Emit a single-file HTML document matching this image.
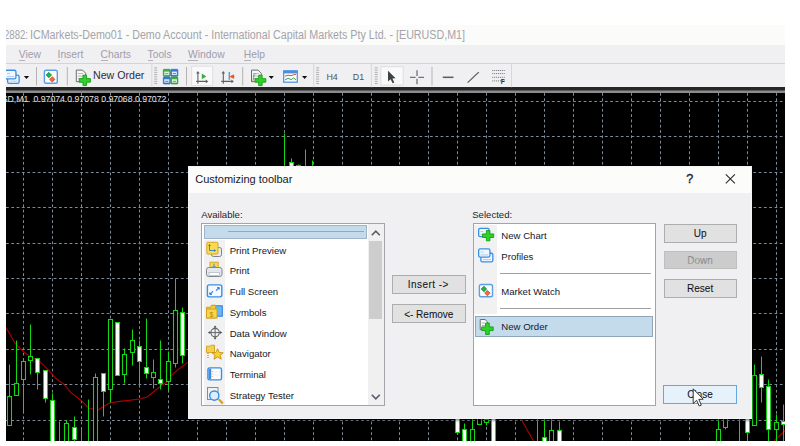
<!DOCTYPE html>
<html><head><meta charset="utf-8">
<style>
html,body{margin:0;padding:0;width:800px;height:446px;overflow:hidden;background:#fff;position:relative;font-family:"Liberation Sans",sans-serif;}
.a{position:absolute;}
.t{position:absolute;white-space:pre;line-height:1;}
.mi{position:absolute;top:45.8px;height:18px;line-height:18px;font-size:10.3px;color:#a09cab;white-space:pre;}
.mi u{text-decoration:none;border-bottom:1px solid #b4b0bc;}
.sep{position:absolute;width:1px;top:67px;height:18px;background:#b8b8b8;}
.gend{position:absolute;width:1px;top:64px;height:24px;background:#d6d6d6;}
.grip{position:absolute;width:3px;top:67px;height:18px;background:repeating-linear-gradient(to bottom,#a8a8a8 0 1px,transparent 1px 2.2px);}
.btn{position:absolute;box-sizing:border-box;border:1px solid #adadad;background:#e1e1e1;font-size:10px;color:#141424;text-align:center;-webkit-text-stroke:0.08px #141424;}
.row{position:absolute;height:20.75px;line-height:22.2px;font-size:9.6px;color:#161628;white-space:pre;}
.hsep{position:absolute;height:1px;background:#a0a0a0;}
</style></head><body>

<!-- main window title bar -->
<div class="a" style="left:6px;top:25px;width:779px;height:20px;background:#fbfbf9;overflow:hidden;">
  <div class="t" style="left:-2.1px;top:-0.2px;line-height:20px;font-size:12px;color:#a4a4ac;transform:scaleX(0.8);transform-origin:0 0;">2882:</div>
  <div class="t" style="left:23.7px;top:-0.2px;line-height:20px;font-size:12px;color:#a4a4ac;transform:scaleX(0.891);transform-origin:0 0;">ICMarkets-Demo01 - Demo Account - International Capital Markets Pty Ltd. - [EURUSD,M1]</div>
</div>

<!-- menu bar -->
<div class="a" style="left:6px;top:45px;width:779px;height:18px;background:#f0f0f2;"></div>
<div class="mi" style="left:18.8px;"><u>V</u>iew</div>
<div class="mi" style="left:57.5px;"><u>I</u>nsert</div>
<div class="mi" style="left:100.6px;"><u>C</u>harts</div>
<div class="mi" style="left:147.5px;"><u>T</u>ools</div>
<div class="mi" style="left:188.1px;"><u>W</u>indow</div>
<div class="mi" style="left:243.8px;"><u>H</u>elp</div>
<div class="a" style="left:6px;top:63px;width:779px;height:1px;background:#d4d4d0;"></div>

<!-- toolbar -->
<div class="a" style="left:6px;top:64px;width:779px;height:23.2px;background:#f0f0f2;"></div>
<div class="a" style="left:6px;top:87px;width:779px;height:3px;background:#262626;"></div>
<div class="a" style="left:6px;top:90px;width:779px;height:1px;background:#5a5a5a;"></div>
<div class="a" style="left:6px;top:91px;width:779px;height:2px;background:#8c8c8c;"></div>
<!--TOOLBAR-->

<svg width="800" height="446" style="position:absolute;left:0;top:0">
<defs><clipPath id="cc"><rect x="6" y="93" width="779" height="348"/></clipPath></defs>
<g clip-path="url(#cc)">
<rect x="0" y="0" width="800" height="446" fill="#000"/>
<g stroke="#7c8a98" stroke-width="1" stroke-dasharray="2.8,2.5"><line x1="23.50" y1="93" x2="23.50" y2="441"/><line x1="52.50" y1="93" x2="52.50" y2="441"/><line x1="81.50" y1="93" x2="81.50" y2="441"/><line x1="110.50" y1="93" x2="110.50" y2="441"/><line x1="139.50" y1="93" x2="139.50" y2="441"/><line x1="168.50" y1="93" x2="168.50" y2="441"/><line x1="197.50" y1="93" x2="197.50" y2="441"/><line x1="226.50" y1="93" x2="226.50" y2="441"/><line x1="255.50" y1="93" x2="255.50" y2="441"/><line x1="284.50" y1="93" x2="284.50" y2="441"/><line x1="313.50" y1="93" x2="313.50" y2="441"/><line x1="342.50" y1="93" x2="342.50" y2="441"/><line x1="371.50" y1="93" x2="371.50" y2="441"/><line x1="399.50" y1="93" x2="399.50" y2="441"/><line x1="428.50" y1="93" x2="428.50" y2="441"/><line x1="457.50" y1="93" x2="457.50" y2="441"/><line x1="486.50" y1="93" x2="486.50" y2="441"/><line x1="515.50" y1="93" x2="515.50" y2="441"/><line x1="544.50" y1="93" x2="544.50" y2="441"/><line x1="573.50" y1="93" x2="573.50" y2="441"/><line x1="602.50" y1="93" x2="602.50" y2="441"/><line x1="631.50" y1="93" x2="631.50" y2="441"/><line x1="660.50" y1="93" x2="660.50" y2="441"/><line x1="689.50" y1="93" x2="689.50" y2="441"/><line x1="718.50" y1="93" x2="718.50" y2="441"/><line x1="747.50" y1="93" x2="747.50" y2="441"/><line x1="776.50" y1="93" x2="776.50" y2="441"/><line x1="6" y1="101.50" x2="785" y2="101.50"/><line x1="6" y1="136.50" x2="785" y2="136.50"/><line x1="6" y1="172.50" x2="785" y2="172.50"/><line x1="6" y1="207.50" x2="785" y2="207.50"/><line x1="6" y1="243.50" x2="785" y2="243.50"/><line x1="6" y1="278.50" x2="785" y2="278.50"/><line x1="6" y1="313.50" x2="785" y2="313.50"/><line x1="6" y1="349.50" x2="785" y2="349.50"/><line x1="6" y1="384.50" x2="785" y2="384.50"/><line x1="6" y1="420.50" x2="785" y2="420.50"/></g>
<g stroke="#b00000" stroke-width="1.1" fill="none">
<polyline points="6.2,327.8 15.2,343.5 23.0,351.4 30.9,357.0 41.0,362.6 48.8,370.4 55.6,378.3 63.4,383.9 71.3,392.9 81.4,400.7 89.2,408.6 98.2,409.7 110.0,402.8 120.2,401.4 140.3,399.0 147.4,396.8 154.4,391.3 160.5,386.3 166.5,382.3 171.6,375.2 178.6,369.2 186.7,363.1 195.0,358.0"/>
<polyline points="519.0,416.0 521.0,419.0 533.0,440.0 535.0,443.0"/>
<polyline points="773.0,443.0 775.7,439.3 784.8,430.9 788.0,428.0"/>
</g>
<g stroke="#12d812" stroke-width="1.05">
<line x1="9.50" y1="364.50" x2="9.50" y2="396.50"/><rect x="7.50" y="396.50" width="4.00" height="29.00" fill="#000"/>
<line x1="16.50" y1="340.50" x2="16.50" y2="383.50"/><rect x="14.50" y="383.50" width="4.00" height="12.00" fill="#000"/>
<line x1="23.50" y1="359.50" x2="23.50" y2="361.50"/><line x1="23.50" y1="379.50" x2="23.50" y2="412.50"/><rect x="21.50" y="361.50" width="4.00" height="18.00" fill="#000"/>
<line x1="30.50" y1="324.50" x2="30.50" y2="356.50"/><line x1="30.50" y1="360.50" x2="30.50" y2="374.50"/><rect x="28.50" y="356.50" width="4.00" height="4.00" fill="#000"/>
<line x1="37.50" y1="372.50" x2="37.50" y2="389.50"/><rect x="35.50" y="358.50" width="4.00" height="14.00" fill="#fff"/>
<line x1="45.50" y1="398.50" x2="45.50" y2="402.50"/><rect x="43.50" y="370.50" width="4.00" height="28.00" fill="#fff"/>
<line x1="52.50" y1="393.50" x2="52.50" y2="400.50"/><rect x="50.50" y="400.50" width="4.00" height="45.00" fill="#fff"/>
<line x1="59.50" y1="421.50" x2="59.50" y2="445.50"/><rect x="57.50" y="445.50" width="4.00" height="1.00" fill="#fff"/>
<line x1="66.50" y1="420.50" x2="66.50" y2="423.50"/><rect x="64.50" y="423.50" width="4.00" height="22.00" fill="#000"/>
<line x1="74.50" y1="416.50" x2="74.50" y2="427.50"/><line x1="74.50" y1="439.50" x2="74.50" y2="445.50"/><rect x="72.50" y="427.50" width="4.00" height="12.00" fill="#fff"/>
<line x1="81.50" y1="427.50" x2="81.50" y2="445.50"/><rect x="79.50" y="445.50" width="4.00" height="1.00" fill="#fff"/>
<line x1="88.50" y1="399.50" x2="88.50" y2="445.50"/><rect x="86.50" y="445.50" width="4.00" height="1.00" fill="#fff"/>
<line x1="95.50" y1="373.50" x2="95.50" y2="377.50"/><rect x="93.50" y="377.50" width="4.00" height="68.00" fill="#000"/>
<line x1="103.50" y1="391.50" x2="103.50" y2="416.50"/><rect x="101.50" y="373.50" width="4.00" height="18.00" fill="#fff"/>
<line x1="110.50" y1="389.50" x2="110.50" y2="402.50"/><rect x="108.50" y="319.50" width="4.00" height="70.00" fill="#000"/>
<rect x="115.50" y="322.50" width="4.00" height="53.00" fill="#fff"/>
<line x1="124.50" y1="348.50" x2="124.50" y2="354.50"/><line x1="124.50" y1="374.50" x2="124.50" y2="383.50"/><rect x="122.50" y="354.50" width="4.00" height="20.00" fill="#000"/>
<line x1="132.50" y1="329.50" x2="132.50" y2="340.50"/><line x1="132.50" y1="352.50" x2="132.50" y2="365.50"/><rect x="130.50" y="340.50" width="4.00" height="12.00" fill="#000"/>
<line x1="139.50" y1="340.50" x2="139.50" y2="346.50"/><line x1="139.50" y1="361.50" x2="139.50" y2="387.50"/><rect x="137.50" y="346.50" width="4.00" height="15.00" fill="#fff"/>
<line x1="146.50" y1="318.50" x2="146.50" y2="367.50"/><line x1="146.50" y1="373.50" x2="146.50" y2="378.50"/><rect x="144.50" y="367.50" width="4.00" height="6.00" fill="#fff"/>
<line x1="153.50" y1="359.50" x2="153.50" y2="372.50"/><line x1="153.50" y1="377.50" x2="153.50" y2="388.50"/><rect x="151.50" y="372.50" width="4.00" height="5.00" fill="#000"/>
<line x1="160.50" y1="340.50" x2="160.50" y2="379.50"/><line x1="160.50" y1="383.50" x2="160.50" y2="389.50"/><rect x="158.50" y="379.50" width="4.00" height="4.00" fill="#fff"/>
<line x1="168.50" y1="351.50" x2="168.50" y2="361.50"/><line x1="168.50" y1="381.50" x2="168.50" y2="390.50"/><rect x="166.50" y="361.50" width="4.00" height="20.00" fill="#000"/>
<line x1="175.50" y1="278.50" x2="175.50" y2="310.50"/><line x1="175.50" y1="363.50" x2="175.50" y2="367.50"/><rect x="173.50" y="310.50" width="4.00" height="53.00" fill="#000"/>
<line x1="182.50" y1="307.50" x2="182.50" y2="312.50"/><line x1="182.50" y1="355.50" x2="182.50" y2="363.50"/><rect x="180.50" y="312.50" width="4.00" height="43.00" fill="#fff"/>
<line x1="284.50" y1="133.50" x2="284.50" y2="200.50"/><line x1="284.50" y1="240.50" x2="284.50" y2="260.50"/><rect x="282.50" y="200.50" width="4.00" height="40.00" fill="#000"/>
<line x1="291.50" y1="158.50" x2="291.50" y2="162.50"/><line x1="291.50" y1="168.50" x2="291.50" y2="180.50"/><rect x="289.50" y="162.50" width="4.00" height="6.00" fill="#fff"/>
<line x1="298.50" y1="164.50" x2="298.50" y2="165.50"/><line x1="298.50" y1="168.50" x2="298.50" y2="180.50"/><rect x="296.50" y="165.50" width="4.00" height="3.00" fill="#000"/>
<line x1="305.50" y1="149.50" x2="305.50" y2="200.50"/><line x1="305.50" y1="240.50" x2="305.50" y2="260.50"/><rect x="303.50" y="200.50" width="4.00" height="40.00" fill="#000"/>
<line x1="312.50" y1="160.50" x2="312.50" y2="200.50"/><line x1="312.50" y1="240.50" x2="312.50" y2="260.50"/><rect x="310.50" y="200.50" width="4.00" height="40.00" fill="#000"/>
<line x1="457.50" y1="400.50" x2="457.50" y2="405.50"/><rect x="455.50" y="405.50" width="4.00" height="27.00" fill="#fff"/>
<line x1="464.50" y1="423.50" x2="464.50" y2="429.50"/><rect x="462.50" y="429.50" width="4.00" height="16.00" fill="#fff"/>
<line x1="472.50" y1="400.50" x2="472.50" y2="429.50"/><rect x="470.50" y="429.50" width="4.00" height="16.00" fill="#000"/>
<line x1="479.50" y1="400.50" x2="479.50" y2="405.50"/><rect x="477.50" y="405.50" width="4.00" height="19.00" fill="#000"/>
<line x1="486.50" y1="400.50" x2="486.50" y2="419.50"/><line x1="486.50" y1="422.50" x2="486.50" y2="425.50"/><rect x="484.50" y="419.50" width="4.00" height="3.00" fill="#000"/>
<line x1="493.50" y1="400.50" x2="493.50" y2="405.50"/><rect x="491.50" y="405.50" width="4.00" height="40.00" fill="#fff"/>
<line x1="537.50" y1="400.50" x2="537.50" y2="445.50"/><rect x="535.50" y="445.50" width="4.00" height="1.00" fill="#000"/>
<line x1="544.50" y1="400.50" x2="544.50" y2="437.50"/><rect x="542.50" y="437.50" width="4.00" height="8.00" fill="#fff"/>
<line x1="551.50" y1="400.50" x2="551.50" y2="430.50"/><rect x="549.50" y="430.50" width="4.00" height="15.00" fill="#000"/>
<line x1="559.50" y1="421.50" x2="559.50" y2="430.50"/><rect x="557.50" y="430.50" width="4.00" height="15.00" fill="#fff"/>
<line x1="718.50" y1="400.50" x2="718.50" y2="429.50"/><rect x="716.50" y="429.50" width="4.00" height="16.00" fill="#000"/>
<line x1="725.50" y1="400.50" x2="725.50" y2="405.50"/><line x1="725.50" y1="427.50" x2="725.50" y2="429.50"/><rect x="723.50" y="405.50" width="4.00" height="22.00" fill="#000"/>
<line x1="739.50" y1="400.50" x2="739.50" y2="445.50"/><rect x="737.50" y="445.50" width="4.00" height="1.00" fill="#000"/>
<line x1="747.50" y1="400.50" x2="747.50" y2="405.50"/><line x1="747.50" y1="432.50" x2="747.50" y2="445.50"/><rect x="745.50" y="405.50" width="4.00" height="27.00" fill="#fff"/>
<line x1="754.50" y1="364.50" x2="754.50" y2="375.50"/><rect x="752.50" y="375.50" width="4.00" height="50.00" fill="#000"/>
<line x1="761.50" y1="356.50" x2="761.50" y2="374.50"/><line x1="761.50" y1="387.50" x2="761.50" y2="402.50"/><rect x="759.50" y="374.50" width="4.00" height="13.00" fill="#fff"/>
<line x1="768.50" y1="379.50" x2="768.50" y2="386.50"/><line x1="768.50" y1="429.50" x2="768.50" y2="445.50"/><rect x="766.50" y="386.50" width="4.00" height="43.00" fill="#fff"/>
<line x1="776.50" y1="414.50" x2="776.50" y2="422.50"/><line x1="776.50" y1="429.50" x2="776.50" y2="445.50"/><rect x="774.50" y="422.50" width="4.00" height="7.00" fill="#000"/>
<line x1="783.50" y1="404.50" x2="783.50" y2="421.50"/><line x1="783.50" y1="424.50" x2="783.50" y2="445.50"/><rect x="781.50" y="421.50" width="4.00" height="3.00" fill="#fff"/>
</g>
</g></svg>

<!-- chart header text -->
<div class="a" style="left:6px;top:93px;width:200px;height:14px;overflow:hidden;">
<div class="t" style="left:-10.5px;top:2.1px;font-size:8.7px;color:#e4e4e4;transform:scaleY(1.1);transform-origin:0 100%;">USD,M1</div>
<div class="t" style="left:27.5px;top:2.1px;font-size:8.7px;color:#e4e4e4;transform:scaleY(1.1);transform-origin:0 100%;">0.97074 0.97078 0.97068 0.97072</div>
</div>

<!-- dialog -->
<div class="a" style="left:188px;top:166px;width:563.6px;height:253px;box-sizing:border-box;border:1px solid #f4f4f4;background:#f0f0f2;box-shadow:0 1px 3px rgba(0,0,0,0.6);"></div>
<div class="a" style="left:189px;top:166.5px;width:561.6px;height:26.1px;background:#fcfcfa;"></div>
<div class="t" style="left:195.2px;top:174.4px;font-size:11px;color:#16162a;">Customizing toolbar</div>
<div class="t" style="left:686.2px;top:173.2px;font-size:12.6px;color:#22222e;-webkit-text-stroke:0.35px #22222e;">?</div>
<svg class="a" style="left:724px;top:173px" width="13" height="12"><path d="M1.8 1.3 L10.9 10.4 M10.9 1.3 L1.8 10.4" stroke="#2a2a30" stroke-width="1.1"/></svg>

<div class="t" style="left:201.2px;top:209.5px;font-size:9.6px;color:#1c1c2c;">Available:</div>
<div class="t" style="left:472.2px;top:209.5px;font-size:9.6px;color:#1c1c2c;">Selected:</div>

<!-- left listbox -->
<div class="a" style="left:201.2px;top:223.3px;width:183.4px;height:183px;box-sizing:border-box;border:1px solid #a4a4a8;background:#fff;"></div>
<div class="a" style="left:204px;top:239.5px;width:21.3px;height:165.5px;background:#f1f1f1;"></div>
<div class="a" style="left:204.2px;top:225px;width:162.4px;height:14.3px;box-sizing:border-box;border:1px solid #9fb4c6;background:#c4dbec;"></div>
<div class="hsep" style="left:228.4px;top:231.3px;width:136px;background:#9aa6b0;"></div>
<!-- scrollbar -->
<div class="a" style="left:367.6px;top:224.3px;width:16px;height:181px;background:#f0f0f0;"></div>
<div class="a" style="left:369px;top:240.6px;width:13px;height:78.8px;background:#cdcdcd;"></div>
<svg class="a" style="left:370px;top:229px" width="12" height="8"><path d="M1.8 6.2 L5.8 2.2 L9.8 6.2" stroke="#5a5a6a" stroke-width="1.6" fill="none"/></svg>
<svg class="a" style="left:369.5px;top:393px" width="12" height="8"><path d="M1.8 1.8 L5.8 5.8 L9.8 1.8" stroke="#5a5a6a" stroke-width="1.6" fill="none"/></svg>

<div class="row" style="left:229.7px;top:239.5px;">Print Preview</div>
<div class="row" style="left:229.7px;top:260.25px;">Print</div>
<div class="row" style="left:229.7px;top:281px;">Full Screen</div>
<div class="row" style="left:229.7px;top:301.75px;">Symbols</div>
<div class="row" style="left:229.7px;top:322.5px;">Data Window</div>
<div class="row" style="left:229.7px;top:343.25px;">Navigator</div>
<div class="row" style="left:229.7px;top:364px;">Terminal</div>
<div class="row" style="left:229.7px;top:384.75px;">Strategy Tester</div>
<!--LICONS-->

<!-- middle buttons -->
<div class="btn" style="left:392px;top:274.5px;width:73.5px;height:19px;line-height:18.6px;letter-spacing:0.45px;text-indent:-1px;">Insert -&gt;</div>
<div class="btn" style="left:392px;top:304px;width:73.5px;height:19.2px;line-height:19px;">&lt;- Remove</div>

<!-- right listbox -->
<div class="a" style="left:472.6px;top:223.3px;width:183px;height:183px;box-sizing:border-box;border:1px solid #a4a4a8;background:#fff;"></div>
<div class="a" style="left:474px;top:225px;width:22.8px;height:89px;background:#f1f1f1;"></div>
<div class="hsep" style="left:500px;top:273px;width:150.5px;background:#a0a0a0;"></div>
<div class="hsep" style="left:500px;top:308.3px;width:150.5px;background:#a0a0a0;"></div>
<div class="a" style="left:475px;top:316.25px;width:178px;height:20.5px;box-sizing:border-box;border:1px solid #8fa6ba;background:#c4dbec;"></div>
<div class="row" style="left:501.3px;top:225px;">New Chart</div>
<div class="row" style="left:501.3px;top:245.75px;">Profiles</div>
<div class="row" style="left:501.3px;top:281px;">Market Watch</div>
<div class="row" style="left:501.3px;top:316.25px;">New Order</div>
<!--RICONS-->

<!-- right buttons -->
<div class="btn" style="left:663.5px;top:224px;width:73.2px;height:18.6px;line-height:17.6px;">Up</div>
<div class="btn" style="left:663.5px;top:250.9px;width:73.2px;height:18.5px;line-height:18px;background:#cccccc;border-color:#bfbfbf;color:#a2a2a2;">Down</div>
<div class="btn" style="left:663.5px;top:279.1px;width:73.2px;height:18.6px;line-height:18.6px;">Reset</div>
<div class="btn" style="left:663.1px;top:384.6px;width:73.7px;height:19.1px;line-height:18.2px;border:1.6px solid #62a8e6;background:#e5f1fb;">Close</div>
<!-- mouse cursor -->
<svg class="a" style="left:690px;top:386px" width="16" height="22"><path d="M3.2 2.8 L3.2 17.5 L6.6 14.3 L9.2 20 L11.3 19.1 L8.8 13.4 L13.2 13.2 Z" fill="#fff" stroke="#202020" stroke-width="0.9"/></svg>


<svg class="a" style="left:0;top:0;pointer-events:none" width="800" height="446"><defs><clipPath id="ov"><rect x="6" y="0" width="779" height="446"/></clipPath></defs><g clip-path="url(#ov)"><rect x="7.65" y="75.15" width="11.45" height="8.20" rx="1.6" fill="#f2f8fe" stroke="#3a8ee6" stroke-width="1.3"/><path d="M9.50 78.30 H12.74 M9.50 81.15 H17.25" stroke="#9cc0e6" stroke-width="0.8"/><rect x="5.25" y="70.25" width="10.70" height="8.70" rx="1.6" fill="#f2f8fe" stroke="#3a8ee6" stroke-width="1.3"/><path d="M7.10 73.60 H10.00 M7.10 76.60 H14.10" stroke="#9cc0e6" stroke-width="0.8"/><path d="M23.90 76.10 H29.10 L26.50 79.10 Z" fill="#101010"/><rect x="36" y="67" width="1" height="18.4" fill="#b4b4b4"/><rect x="44.40" y="70.30" width="12.90" height="13.00" rx="1.8" fill="#fcfeff" stroke="#5aa0e8" stroke-width="1.4"/><path d="M48.85 72.36 L51.56 75.07 L48.85 77.79 L46.13 75.07 Z" fill="#24b04a" stroke="#108030" stroke-width="0.7"/><path d="M52.28 76.67 L55.00 79.39 L52.28 82.11 L49.56 79.39 Z" fill="#f46a3a" stroke="#d04010" stroke-width="0.7"/><rect x="66.8" y="67" width="1" height="18.4" fill="#b4b4b4"/><path d="M76.30 70.10 H82.56 L85.70 73.24 V81.70 H76.30 Z" fill="#f6f6f6" stroke="#6c6c6c" stroke-width="1"/><path d="M77.80 73.60 H83.20 M77.80 76.10 H84.20 M77.80 78.60 H84.20" stroke="#a8a8a8" stroke-width="0.8"/><path d="M83.01 75.20 H86.59 V78.61 H90.40 V82.19 H86.59 V85.60 H83.01 V82.19 H79.20 V78.61 H83.01 Z" fill="#30d030" stroke="#10a010" stroke-width="0.9" stroke-linejoin="round"/><text x="93" y="79.3" font-family="Liberation Sans" font-size="10.63" fill="#2c2c44">New Order</text><rect x="151.3" y="64" width="1" height="23.2" fill="#d8d8d8"/><rect x="154.20" y="67.40" width="3" height="0.9" fill="#a8a8a8"/><rect x="154.20" y="69.65" width="3" height="0.9" fill="#a8a8a8"/><rect x="154.20" y="71.90" width="3" height="0.9" fill="#a8a8a8"/><rect x="154.20" y="74.15" width="3" height="0.9" fill="#a8a8a8"/><rect x="154.20" y="76.40" width="3" height="0.9" fill="#a8a8a8"/><rect x="154.20" y="78.65" width="3" height="0.9" fill="#a8a8a8"/><rect x="154.20" y="80.90" width="3" height="0.9" fill="#a8a8a8"/><rect x="154.20" y="83.15" width="3" height="0.9" fill="#a8a8a8"/><rect x="163.30" y="69.30" width="7.00" height="7.05" rx="0.8" fill="#3cb043" stroke="#2a8a30" stroke-width="0.6"/><rect x="164.30" y="71.60" width="5.00" height="3.45" fill="#ffffff" opacity="0.85"/><rect x="165.20" y="73.20" width="3.20" height="0.9" fill="#3cb043"/><rect x="170.90" y="69.30" width="7.00" height="7.05" rx="0.8" fill="#2f7fe0" stroke="#1e60b8" stroke-width="0.6"/><rect x="171.90" y="71.60" width="5.00" height="3.45" fill="#ffffff" opacity="0.85"/><rect x="172.80" y="73.20" width="3.20" height="0.9" fill="#2f7fe0"/><rect x="163.30" y="76.95" width="7.00" height="7.05" rx="0.8" fill="#2f7fe0" stroke="#1e60b8" stroke-width="0.6"/><rect x="164.30" y="79.25" width="5.00" height="3.45" fill="#ffffff" opacity="0.85"/><rect x="165.20" y="80.85" width="3.20" height="0.9" fill="#2f7fe0"/><rect x="170.90" y="76.95" width="7.00" height="7.05" rx="0.8" fill="#3cb043" stroke="#2a8a30" stroke-width="0.6"/><rect x="171.90" y="79.25" width="5.00" height="3.45" fill="#ffffff" opacity="0.85"/><rect x="172.80" y="80.85" width="3.20" height="0.9" fill="#3cb043"/><rect x="186" y="67" width="1" height="18.4" fill="#b4b4b4"/><rect x="191.6" y="66.2" width="21" height="19.4" fill="#f9f9f9" stroke="#e0e0e0" stroke-width="1"/><path d="M197.90 72.30 V83.70 M196.20 81.40 H207.00" stroke="#5c6064" stroke-width="1.1"/><path d="M196.10 73.50 L197.90 71.10 L199.70 73.50 Z M205.80 79.60 L208.20 81.40 L205.80 83.20 Z" fill="#5c6064"/><path d="M201.8 73.6 L206.3 76.4 L201.8 79.2 Z" fill="#30b040"/><path d="M223.30 72.30 V83.70 M221.20 81.40 H232.60" stroke="#5c6064" stroke-width="1.1"/><path d="M221.50 73.50 L223.30 71.10 L225.10 73.50 Z M231.40 79.60 L233.80 81.40 L231.40 83.20 Z" fill="#5c6064"/><rect x="228.6" y="71.9" width="1.5" height="7.9" fill="#5c9ad8"/><path d="M230.2 76.6 L233.6 74.8 L233.6 78.4 Z M233 76.6 H234.5" fill="#e05a20" stroke="#e05a20" stroke-width="0.8"/><rect x="242.2" y="67" width="1" height="18.4" fill="#b4b4b4"/><path d="M251.50 70.10 H258.02 L261.30 73.38 V81.70 H251.50 Z" fill="#f6f6f6" stroke="#6c6c6c" stroke-width="1"/><path d="M253.00 73.60 H258.80 M253.00 76.10 H259.80 M253.00 78.60 H259.80" stroke="#a8a8a8" stroke-width="0.8"/><text x="252.5" y="79" font-family="Liberation Serif" font-style="italic" font-size="8" fill="#606060">f</text><path d="M258.67 75.20 H262.13 V78.67 H265.80 V82.13 H262.13 V85.60 H258.67 V82.13 H255.00 V78.67 H258.67 Z" fill="#30d030" stroke="#10a010" stroke-width="0.9" stroke-linejoin="round"/><path d="M268.70 76.00 H273.90 L271.30 79.00 Z" fill="#101010"/><rect x="283.70" y="70.80" width="13.60" height="11.40" fill="#f8fbff" stroke="#4a8ede" stroke-width="1.2"/><rect x="283.70" y="70.80" width="13.60" height="2.6" fill="#4a8ede"/><polyline points="285.10,76.20 288.10,75.20 291.10,75.70 293.60,74.70 295.90,74.40" fill="none" stroke="#d05030" stroke-width="1"/><polyline points="285.10,79.80 288.10,78.30 291.10,79.60 293.60,78.00 295.90,79.80" fill="none" stroke="#40a040" stroke-width="1"/><path d="M302.00 76.10 H307.20 L304.60 79.10 Z" fill="#101010"/><rect x="313.2" y="64" width="1" height="23.2" fill="#d8d8d8"/><rect x="316.10" y="67.40" width="3" height="0.9" fill="#a8a8a8"/><rect x="316.10" y="69.65" width="3" height="0.9" fill="#a8a8a8"/><rect x="316.10" y="71.90" width="3" height="0.9" fill="#a8a8a8"/><rect x="316.10" y="74.15" width="3" height="0.9" fill="#a8a8a8"/><rect x="316.10" y="76.40" width="3" height="0.9" fill="#a8a8a8"/><rect x="316.10" y="78.65" width="3" height="0.9" fill="#a8a8a8"/><rect x="316.10" y="80.90" width="3" height="0.9" fill="#a8a8a8"/><rect x="316.10" y="83.15" width="3" height="0.9" fill="#a8a8a8"/><text x="326.4" y="80.4" font-family="Liberation Sans" font-size="8.9" fill="#505056">H4</text><text x="352.8" y="80.4" font-family="Liberation Sans" font-size="8.9" fill="#505056">D1</text><rect x="370.9" y="64" width="1" height="23.2" fill="#d8d8d8"/><rect x="374.70" y="67.40" width="3" height="0.9" fill="#a8a8a8"/><rect x="374.70" y="69.65" width="3" height="0.9" fill="#a8a8a8"/><rect x="374.70" y="71.90" width="3" height="0.9" fill="#a8a8a8"/><rect x="374.70" y="74.15" width="3" height="0.9" fill="#a8a8a8"/><rect x="374.70" y="76.40" width="3" height="0.9" fill="#a8a8a8"/><rect x="374.70" y="78.65" width="3" height="0.9" fill="#a8a8a8"/><rect x="374.70" y="80.90" width="3" height="0.9" fill="#a8a8a8"/><rect x="374.70" y="83.15" width="3" height="0.9" fill="#a8a8a8"/><rect x="380.8" y="66.7" width="22.4" height="18.4" fill="#f9f9f9" stroke="#dedede" stroke-width="1"/><path d="M388 70.8 L388 81.5 L390.6 79.3 L392.6 83.2 L394.3 82.4 L392.4 78.6 L395.6 78.3 Z" fill="#3c4248"/><path d="M410 77.3 H415.6 M418.4 77.3 H424 M417 70.3 V75.9 M417 78.7 V84.3" stroke="#6c747c" stroke-width="1.3"/><rect x="431.5" y="67" width="1" height="18.4" fill="#b4b4b4"/><path d="M442.8 77.3 H453.5" stroke="#5c5c5c" stroke-width="1.5"/><path d="M467.6 82.6 L478.8 72.1" stroke="#5c5c5c" stroke-width="1.3"/><path d="M492.3 70.50 H504.7" stroke="#707478" stroke-width="1" stroke-dasharray="1,0.9"/><path d="M492.3 73.60 H504.7" stroke="#707478" stroke-width="1" stroke-dasharray="1,0.9"/><path d="M492.3 77.30 H504.7" stroke="#707478" stroke-width="1" stroke-dasharray="1,0.9"/><path d="M492.3 80.90 H504.7" stroke="#707478" stroke-width="1" stroke-dasharray="1,0.9"/><text x="500.8" y="84.2" font-family="Liberation Sans" font-weight="bold" font-size="6.5" fill="#303030">F</text><rect x="511" y="64" width="1" height="23.2" fill="#d8d8d8"/><rect x="211.5" y="247.5" width="10" height="9" rx="2" fill="#e8ecf0" stroke="#7a8290" stroke-width="1"/><rect x="206.8" y="242.3" width="11.2" height="11.8" rx="1" fill="#f8dc50" stroke="#d8a428" stroke-width="1"/><path d="M209.5 244.5 V250.5 H215.5 M209.5 244.5 L208.5 246 M209.5 244.5 L210.5 246 M215.5 250.5 L214 249.5 M215.5 250.5 L214 251.5" stroke="#2f7ce0" stroke-width="0.9" fill="none"/><rect x="210" y="262.2" width="8.2" height="7" fill="#f8dc50" stroke="#d8a428" stroke-width="1"/><path d="M214 263.5 V267.5 M212.5 266 L214 267.5 L215.5 266" stroke="#2f7ce0" stroke-width="0.9" fill="none"/><rect x="206.5" y="267.5" width="15.5" height="9" rx="2.2" fill="#e4e8ec" stroke="#808892" stroke-width="1"/><rect x="209" y="272.5" width="10.5" height="3" fill="#ffffff" stroke="#a0a8b0" stroke-width="0.6"/><rect x="207.4" y="284.9" width="14.4" height="12" rx="1.8" fill="#f4faff" stroke="#3a8ee6" stroke-width="1.4"/><path d="M209.8 294.5 L213 291.3 M209.8 294.5 V292.5 M209.8 294.5 H211.8 M219.2 287.5 L216 290.7 M219.2 287.5 V289.5 M219.2 287.5 H217.2" stroke="#2f7ce0" stroke-width="1.1" fill="none"/><rect x="211.5" y="305.8" width="10.8" height="10.4" fill="#6ab6f2" stroke="#2f7ce0" stroke-width="1"/><path d="M206.5 307.3 H210.5 L211.5 305.2 H215.5 V318 H206.5 Z" fill="#f4cc3a" stroke="#d0a020" stroke-width="1"/><rect x="206.5" y="309" width="10.5" height="9" fill="#f8d848" stroke="#d0a020" stroke-width="1"/><text x="209.5" y="316.5" font-family="Liberation Sans" font-size="7" fill="#c08010">$</text><circle cx="215.1" cy="332.6" r="4.2" fill="none" stroke="#606468" stroke-width="1.1"/><path d="M215.1 326 V339.2 M208.5 332.6 H221.7" stroke="#606468" stroke-width="1"/><path d="M215.1 325.6 L213.6 327.6 H216.6 Z M215.1 339.6 L213.6 337.6 H216.6 Z M208.1 332.6 L210.1 331.1 V334.1 Z M222.1 332.6 L220.1 331.1 V334.1 Z" fill="#505458"/><path d="M206.5 346.2 H210 L211 345.2 H214.5 V352.5 H206.5 Z" fill="#f4d050" stroke="#d0a020" stroke-width="0.9"/><path d="M208 353 V358" stroke="#707070" stroke-width="0.9" stroke-dasharray="1,1"/><path d="M217.6 348.8 L219.3 352.5 L223.2 352.8 L220.2 355.3 L221.2 359.2 L217.6 357 L214 359.2 L215 355.3 L212 352.8 L215.9 352.5 Z" fill="#f8d030" stroke="#c89010" stroke-width="0.9"/><rect x="207.9" y="367.9" width="13.6" height="12" rx="1.6" fill="#ffffff" stroke="#3a8ee6" stroke-width="1.4"/><rect x="208.6" y="368.6" width="2.6" height="10.6" fill="#3a8ee6"/><path d="M212.2 371 V377" stroke="#f08040" stroke-width="0.8" stroke-dasharray="1,1.5"/><path d="M213 372 H220 M213 375 H220" stroke="#d8e6f4" stroke-width="0.7"/><rect x="207.5" y="387.5" width="10.5" height="12" fill="#f0f0f0" stroke="#8a8a8a" stroke-width="1"/><path d="M219 399.5 L222.8 403.5" stroke="#d8a020" stroke-width="2.2"/><circle cx="214.3" cy="395.6" r="4.6" fill="#dceefc" stroke="#3a8ee6" stroke-width="1.4"/><rect x="478.65" y="228.45" width="10.50" height="8.20" rx="1.6" fill="#f2f8fe" stroke="#3a8ee6" stroke-width="1.3"/><path d="M480.50 231.60 H483.31 M480.50 234.45 H487.30" stroke="#9cc0e6" stroke-width="0.8"/><path d="M486.37 230.60 H489.93 V233.92 H493.70 V237.48 H489.93 V240.80 H486.37 V237.48 H482.60 V233.92 H486.37 Z" fill="#30d030" stroke="#10a010" stroke-width="0.9" stroke-linejoin="round"/><rect x="480.85" y="253.25" width="12.00" height="8.70" rx="1.6" fill="#f2f8fe" stroke="#3a8ee6" stroke-width="1.3"/><path d="M482.70 256.60 H486.19 M482.70 259.60 H491.00" stroke="#9cc0e6" stroke-width="0.8"/><rect x="478.65" y="248.85" width="11.30" height="8.30" rx="1.6" fill="#f2f8fe" stroke="#3a8ee6" stroke-width="1.3"/><path d="M480.50 252.04 H483.67 M480.50 254.92 H488.10" stroke="#9cc0e6" stroke-width="0.8"/><rect x="479.40" y="284.50" width="13.10" height="12.30" rx="1.8" fill="#fcfeff" stroke="#5aa0e8" stroke-width="1.4"/><path d="M483.92 286.25 L486.68 289.01 L483.92 291.76 L481.17 289.01 Z" fill="#24b04a" stroke="#108030" stroke-width="0.7"/><path d="M487.40 290.36 L490.15 293.12 L487.40 295.87 L484.64 293.12 Z" fill="#f46a3a" stroke="#d04010" stroke-width="0.7"/><path d="M480.20 319.50 H485.09 L487.50 321.91 V329.50 H480.20 Z" fill="#f6f6f6" stroke="#6c6c6c" stroke-width="1"/><path d="M481.70 323.00 H485.00 M481.70 325.50 H486.00 M481.70 328.00 H486.00" stroke="#a8a8a8" stroke-width="0.8"/><path d="M485.61 323.00 H489.29 V326.91 H493.20 V330.59 H489.29 V334.50 H485.61 V330.59 H481.70 V326.91 H485.61 Z" fill="#30d030" stroke="#10a010" stroke-width="0.9" stroke-linejoin="round"/></g></svg>
</body></html>
